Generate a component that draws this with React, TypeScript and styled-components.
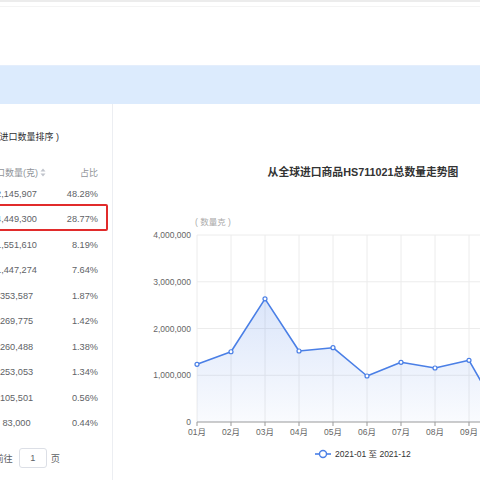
import styled, { createGlobalStyle } from 'styled-components'

const GlobalStyle = createGlobalStyle`
	html, body {
		margin: 0;
		padding: 0;
		background: #fff;
	}
	body {
		font-family: "Liberation Sans", "Noto Sans CJK SC", sans-serif;
		overflow: hidden;
	}
`

type Row = {
	name: string
	amount: string
	share: string
}

const rows: Row[] = [
	{ name: '英国', amount: '2,145,907', share: '48.28%' },
	{ name: '瑞士', amount: '4,449,300', share: '28.77%' },
	{ name: '中国香港', amount: '1,551,610', share: '8.19%' },
	{ name: '美国', amount: '1,447,274', share: '7.64%' },
	{ name: '意大利', amount: '353,587', share: '1.87%' },
	{ name: '德国', amount: '269,775', share: '1.42%' },
	{ name: '日本', amount: '260,488', share: '1.38%' },
	{ name: '新加坡', amount: '253,053', share: '1.34%' },
	{ name: '泰国', amount: '105,501', share: '0.56%' },
	{ name: '韩国', amount: '83,000', share: '0.44%' },
]

const months = ['01月', '02月', '03月', '04月', '05月', '06月', '07月', '08月', '09月', '10月', '11月', '12月']
// millions
const values = [1.234, 1.503, 2.635, 1.519, 1.589, 0.984, 1.277, 1.155, 1.319, 0.05, 1.1, 1.2]
const yTicks = ['0', '1,000,000', '2,000,000', '3,000,000', '4,000,000']

const X0 = 84
const STEP = 34
const Y0 = 222
const UNIT = 46.75

const Page = styled.div`
	width: 480px;
	height: 480px;
	overflow: hidden;
	display: flex;
	flex-direction: column;
`
const Header = styled.header`
	height: 63px;
	border-top: 2px solid #ececec;
`
const HeaderLine = styled.div`
	margin-top: 4px;
	border-top: 1px solid #f4f4f4;
`
const Band = styled.div`
	height: 39px;
	background: #dcebfd;
	border-top: 1px solid #e4eefc;
	box-sizing: border-box;
`
const Content = styled.div`
	display: flex;
	flex: 1;
`
const LeftPanel = styled.section`
	width: 113px;
	flex-shrink: 0;
	box-sizing: border-box;
	border-right: 1px solid #eceef2;
	overflow: hidden;
	padding-top: 26px;
`
const PanelTitle = styled.div`
	width: 59px;
	display: flex;
	justify-content: flex-end;
	white-space: nowrap;
	font-size: 9px;
	line-height: 14px;
	color: #303133;
`
const Table = styled.div`
	margin: 19px 0 0 -108px;
	width: 216px;
`
const TableRow = styled.div<{ $head?: boolean; $marked?: boolean }>`
	position: relative;
	display: grid;
	grid-template-columns: 80px 89px 47px;
	align-items: center;
	height: ${(p) => (p.$head ? '18px' : '25.5px')};
	font-size: ${(p) => (p.$head ? '9px' : '9.2px')};
	color: ${(p) => (p.$head ? '#909399' : '#606266')};
	white-space: nowrap;

	${(p) =>
		p.$marked &&
		`
		&::after {
			content: '';
			position: absolute;
			top: -3px;
			bottom: 1px;
			left: -4px;
			right: 0;
			border: 2px solid #e12b2b;
			border-radius: 2px;
		}
	`}
`
const NameCell = styled.div`
	padding-left: 10px;
`
const AmountCell = styled.div`
	display: flex;
	justify-content: center;
	align-items: center;
	gap: 2px;
`
const ShareCell = styled.div`
	text-align: right;
	padding-right: 10px;
`
const SortCaret = () => (
	<svg width="6" height="9" viewBox="0 0 6 9">
		<path d="M3 0.5 L5.5 3.5 H0.5 Z" fill="#c0c4cc" />
		<path d="M3 8.5 L5.5 5.5 H0.5 Z" fill="#c0c4cc" />
	</svg>
)
const Pager = styled.div`
	width: 60px;
	margin-top: 12px;
	display: flex;
	justify-content: flex-end;
	align-items: center;
	white-space: nowrap;
	font-size: 9.2px;
	color: #606266;
`
const PagerText = styled.span<{ $gap: number }>`
	flex-shrink: 0;
	margin-left: ${(p) => p.$gap}px;
`
const PagerInput = styled.div`
	flex-shrink: 0;
	width: 28px;
	height: 20px;
	box-sizing: border-box;
	margin-left: 6px;
	border: 1px solid #dcdfe6;
	border-radius: 3px;
	display: flex;
	justify-content: center;
	align-items: center;
`
const RightPanel = styled.section`
	width: 500px;
	flex-shrink: 0;
	padding-top: 60px;
	display: flex;
	flex-direction: column;
	align-items: center;
`
const ChartTitle = styled.h3`
	margin: 0;
	font-size: 10.8px;
	line-height: 16px;
	font-weight: bold;
	color: #333;
`
const ChartSvg = styled.svg`
	display: block;
	margin-top: 20px;
	font-family: "Liberation Sans", "Noto Sans CJK SC", sans-serif;
`

const TrendChart = () => {
	const pts = values.map((v, i) => [X0 + i * STEP, Y0 - v * UNIT])
	const line = pts.map((p, i) => `${i ? 'L' : 'M'}${p[0]} ${p[1]}`).join(' ')
	const last = pts[pts.length - 1]
	const area = `${line} L${last[0]} ${Y0} L${X0} ${Y0} Z`
	const right = X0 + STEP * 11

	return (
		<ChartSvg width="500" height="270" viewBox="0 0 500 270">
			<defs>
				<linearGradient id="areaFill" x1="0" y1="0" x2="0" y2="1">
					<stop offset="0" stopColor="#4a7fe6" stopOpacity="0.2" />
					<stop offset="1" stopColor="#4a7fe6" stopOpacity="0.03" />
				</linearGradient>
			</defs>
			<text x="100" y="25" fontSize="8.5" fill="#aaa" textAnchor="middle" xmlSpace="preserve">
				( 数量克 )
			</text>
			{yTicks.map((t, i) => {
				const y = Y0 - i * UNIT
				return (
					<g key={t}>
						{i > 0 && <line x1={X0} x2={right} y1={y} y2={y} stroke="#ececec" strokeWidth="1" />}
						<text x="78" y={y + 3} fontSize="8.5" fill="#666" textAnchor="end">
							{t}
						</text>
					</g>
				)
			})}
			{months.map((m, i) => {
				const x = X0 + i * STEP
				return (
					<g key={m}>
						<line x1={x} x2={x} y1={Y0 - 4 * UNIT} y2={Y0} stroke="#ececec" strokeWidth="1" />
						<line x1={x} x2={x} y1={Y0} y2={Y0 + 4} stroke="#999" strokeWidth="1" />
						<text x={x} y={Y0 + 13} fontSize="8.5" fill="#666" textAnchor="middle">
							{m}
						</text>
					</g>
				)
			})}
			<line x1={X0} x2={right} y1={Y0} y2={Y0} stroke="#999" strokeWidth="1" />
			<path d={area} fill="url(#areaFill)" />
			<path d={line} fill="none" stroke="#4a7fe6" strokeWidth="1.6" strokeLinejoin="round" />
			{pts.map((p, i) => (
				<circle key={i} cx={p[0]} cy={p[1]} r="2" fill="#fff" stroke="#4a7fe6" strokeWidth="1.2" />
			))}
			<line x1="202" x2="218" y1="254" y2="254" stroke="#4a7fe6" strokeWidth="1.6" />
			<circle cx="210" cy="254" r="3.5" fill="#fff" stroke="#4a7fe6" strokeWidth="1.4" />
			<text x="222" y="257" fontSize="8.5" fill="#333">
				2021-01 至 2021-12
			</text>
		</ChartSvg>
	)
}

export default function App() {
	return (
		<>
			<GlobalStyle />
			<Page>
				<Header>
					<HeaderLine />
				</Header>
				<Band />
				<Content>
					<LeftPanel>
						<PanelTitle>各国家/地区 ( 按从全球进口数量排序 )</PanelTitle>
						<Table>
							<TableRow $head>
								<NameCell>国家/地区</NameCell>
								<AmountCell>
									进口数量(克)
									<SortCaret />
								</AmountCell>
								<ShareCell>占比</ShareCell>
							</TableRow>
							{rows.map((row, i) => (
								<TableRow key={row.name} $marked={i === 1}>
									<NameCell>{row.name}</NameCell>
									<AmountCell>{row.amount}</AmountCell>
									<ShareCell>{row.share}</ShareCell>
								</TableRow>
							))}
						</Table>
						<Pager>
							<PagerText $gap={0}>共 10 条</PagerText>
							<PagerText $gap={8}>前往</PagerText>
							<PagerInput>1</PagerInput>
							<PagerText $gap={4}>页</PagerText>
						</Pager>
					</LeftPanel>
					<RightPanel>
						<ChartTitle>从全球进口商品HS711021总数量走势图</ChartTitle>
						<TrendChart />
					</RightPanel>
				</Content>
			</Page>
		</>
	)
}
